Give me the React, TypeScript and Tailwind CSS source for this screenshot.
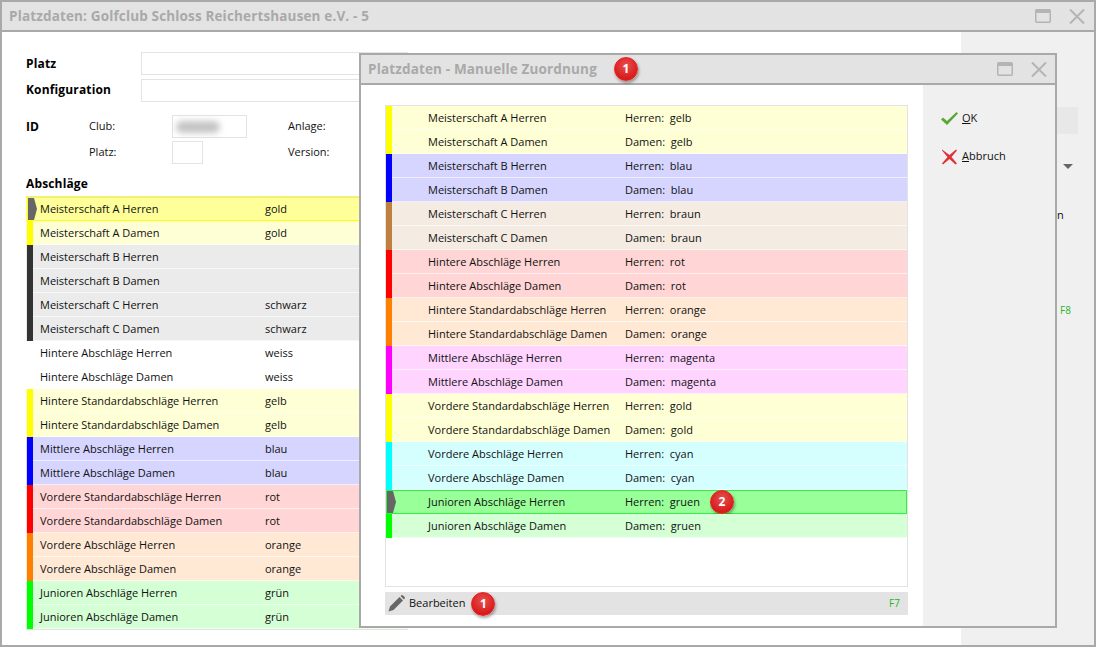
type Row = { name: string; value: string; strip: string; bg: string; active?: string }

const yellow = { strip: 'bg-[#ffff00]', bg: 'bg-[#ffffd5]' }
const blue = { strip: 'bg-[#0000ff]', bg: 'bg-[#d5d5ff]' }
const brown = { strip: 'bg-[#bf7f3f]', bg: 'bg-[#f4ebe2]' }
const red = { strip: 'bg-[#ff0000]', bg: 'bg-[#ffd5d5]' }
const orange = { strip: 'bg-[#ff8000]', bg: 'bg-[#ffe9d5]' }
const magenta = { strip: 'bg-[#ff00ff]', bg: 'bg-[#ffd5ff]' }
const cyan = { strip: 'bg-[#00ffff]', bg: 'bg-[#d5ffff]' }
const green = { strip: 'bg-[#00ff00]', bg: 'bg-[#d5ffd5]' }
const dark = { strip: 'bg-[#333333]', bg: 'bg-[#ebebeb]' }
const white = { strip: 'bg-white', bg: 'bg-white' }

const leftRows: Row[] = [
  { name: 'Meisterschaft A Herren', value: 'gold', strip: yellow.strip, bg: 'bg-[#ffff99]', active: 'border-y border-[#ffff00]' },
  { name: 'Meisterschaft A Damen', value: 'gold', ...yellow },
  { name: 'Meisterschaft B Herren', value: '', ...dark },
  { name: 'Meisterschaft B Damen', value: '', ...dark },
  { name: 'Meisterschaft C Herren', value: 'schwarz', ...dark },
  { name: 'Meisterschaft C Damen', value: 'schwarz', ...dark },
  { name: 'Hintere Abschläge Herren', value: 'weiss', ...white },
  { name: 'Hintere Abschläge Damen', value: 'weiss', ...white },
  { name: 'Hintere Standardabschläge Herren', value: 'gelb', ...yellow },
  { name: 'Hintere Standardabschläge Damen', value: 'gelb', ...yellow },
  { name: 'Mittlere Abschläge Herren', value: 'blau', ...blue },
  { name: 'Mittlere Abschläge Damen', value: 'blau', ...blue },
  { name: 'Vordere Standardabschläge Herren', value: 'rot', ...red },
  { name: 'Vordere Standardabschläge Damen', value: 'rot', ...red },
  { name: 'Vordere Abschläge Herren', value: 'orange', ...orange },
  { name: 'Vordere Abschläge Damen', value: 'orange', ...orange },
  { name: 'Junioren Abschläge Herren', value: 'grün', ...green },
  { name: 'Junioren Abschläge Damen', value: 'grün', ...green },
]

const modalRows: Row[] = [
  { name: 'Meisterschaft A Herren', value: 'Herren:  gelb', ...yellow },
  { name: 'Meisterschaft A Damen', value: 'Damen:  gelb', ...yellow },
  { name: 'Meisterschaft B Herren', value: 'Herren:  blau', ...blue },
  { name: 'Meisterschaft B Damen', value: 'Damen:  blau', ...blue },
  { name: 'Meisterschaft C Herren', value: 'Herren:  braun', ...brown },
  { name: 'Meisterschaft C Damen', value: 'Damen:  braun', ...brown },
  { name: 'Hintere Abschläge Herren', value: 'Herren:  rot', ...red },
  { name: 'Hintere Abschläge Damen', value: 'Damen:  rot', ...red },
  { name: 'Hintere Standardabschläge Herren', value: 'Herren:  orange', ...orange },
  { name: 'Hintere Standardabschläge Damen', value: 'Damen:  orange', ...orange },
  { name: 'Mittlere Abschläge Herren', value: 'Herren:  magenta', ...magenta },
  { name: 'Mittlere Abschläge Damen', value: 'Damen:  magenta', ...magenta },
  { name: 'Vordere Standardabschläge Herren', value: 'Herren:  gold', ...yellow },
  { name: 'Vordere Standardabschläge Damen', value: 'Damen:  gold', ...yellow },
  { name: 'Vordere Abschläge Herren', value: 'Herren:  cyan', ...cyan },
  { name: 'Vordere Abschläge Damen', value: 'Damen:  cyan', ...cyan },
  { name: 'Junioren Abschläge Herren', value: 'Herren:  gruen', strip: green.strip, bg: 'bg-[#99ff99]', active: 'border border-[#33ee44]' },
  { name: 'Junioren Abschläge Damen', value: 'Damen:  gruen', ...green },
]

function Badge({ n }: { n: number }) {
  return (
    <span className="flex h-[24px] w-[24px] shrink-0 items-center justify-center rounded-full border border-[#e82020] bg-[radial-gradient(circle_at_50%_35%,#e85050,#d81c1c_70%)] text-[12px] font-bold text-white shadow-[1px_2px_3px_rgba(0,0,0,0.35)]">
      {n}
    </span>
  )
}

function Marker({ className }: { className: string }) {
  return (
    <svg className={`absolute top-0 ${className}`} width="10" height="22" viewBox="0 0 10 22">
      <path d="M0 0h6l3 11-3 11H0z" fill="#666666" />
    </svg>
  )
}

function Separator({ className }: { className: string }) {
  return <span className={`absolute bottom-0 right-0 h-px bg-white/60 ${className}`} />
}

function TitleBar({ title, badge }: { title: string; badge?: boolean }) {
  return (
    <div className={`flex h-[30px] shrink-0 items-center border-b-[2px] border-[#a9a9a9] bg-[#e3e3e3] ${badge ? 'pl-[7px] pr-[8px]' : 'pl-[7px] pr-[9px]'}`}>
      <span className="text-[13.5px] font-bold tracking-[0.15px] text-[#a9a9a9]">{title}</span>
      {badge && (
        <span className="ml-[17px]">
          <Badge n={1} />
        </span>
      )}
      <svg className="ml-auto" width="16" height="15" viewBox="0 0 16 15">
        <rect x="0.75" y="0.75" width="14.5" height="12.5" rx="1" fill="none" stroke="#b4b4b4" strokeWidth="1.5" />
        <rect x="1" y="1" width="14" height="3" fill="#b4b4b4" />
      </svg>
      <svg className="ml-[18px]" width="16" height="15" viewBox="0 0 16 15">
        <path d="M1 0.5 15 14.5M15 0.5 1 14.5" stroke="#b4b4b4" strokeWidth="2" />
      </svg>
    </div>
  )
}

function Input({ className }: { className: string }) {
  return <div className={`border-[1.5px] border-[#e3e3e3] bg-white ${className}`} />
}

function LeftTable() {
  return (
    <div className="mt-[3px] flex w-[382px] flex-col border-y border-[#e3e3e3]">
      {leftRows.map((r) => (
        <div key={r.name} className={`relative flex h-[24px] items-center pl-[1px] ${r.bg} ${r.active ?? ''}`}>
          <span className={`mr-[7px] w-[6px] shrink-0 self-stretch ${r.strip}`} />
          <span className="w-[225px] shrink-0 text-[11px] text-[#111]">{r.name}</span>
          <span className="text-[11px] text-[#111]">{r.value}</span>
          {r.active ? <Marker className="left-[2px]" /> : <Separator className="left-[7px]" />}
        </div>
      ))}
    </div>
  )
}

function Modal() {
  return (
    <div className="absolute left-[357px] top-[51px] flex h-[575px] w-[698px] flex-col border-[2px] border-[#a9a9a9] bg-white">
      <TitleBar title="Platzdaten - Manuelle Zuordnung" badge />
      <div className="flex flex-1">
        <div className="flex w-[562px] flex-col pl-[24px] pt-[20px]">
          <div className="flex h-[482px] w-[523px] flex-col border border-[#e3e3e3] bg-white">
            {modalRows.map((r) => (
              <div key={r.name} className={`relative flex h-[24px] shrink-0 items-center ${r.bg} ${r.active ?? ''}`}>
                <span className={`w-[6px] shrink-0 self-stretch ${r.active ? 'mr-[35px]' : 'mr-[36px]'} ${r.strip}`} />
                <span className="w-[197px] shrink-0 text-[11px] text-[#111]">{r.name}</span>
                <span className="whitespace-pre text-[11px] text-[#111]">{r.value}</span>
                {r.active && (
                  <span className="ml-[10px]">
                    <Badge n={2} />
                  </span>
                )}
                {r.active ? <Marker className="left-0" /> : <Separator className="left-[6px]" />}
              </div>
            ))}
          </div>
          <div className="mt-[5px] flex h-[23px] w-[523px] items-center bg-[#e3e3e3] pl-[3px] pr-[8px]">
            <svg width="17" height="17" viewBox="0 0 17 17">
              <path d="M0.5 16.5 2 11.5 11.5 2l3.5 3.5L5.5 15z" fill="#666666" />
              <path d="M12.5 1 13.5 0.3q.7-.5 1.4.1l1.7 1.7q.6.7.1 1.4L16 4.5z" fill="#666666" />
            </svg>
            <span className="ml-[4px] text-[11px] text-[#111]">Bearbeiten</span>
            <span className="ml-[6px]">
              <Badge n={1} />
            </span>
            <span className="ml-auto text-[10px] text-[#1fb81f]">F7</span>
          </div>
        </div>
        <div className="flex flex-1 flex-col gap-[19px] bg-[#f0f0f0] pl-[17px] pt-[24px]">
          <div className="flex h-[19px] items-center">
            <svg width="19" height="15" viewBox="0 0 19 15">
              <path d="M1 8.5 3 6.5l4 3.5L16.5 1 18 2.5 7 14z" fill="#5aa832" />
            </svg>
            <span className="ml-[3px] text-[11px] text-[#111]">
              <span className="underline">O</span>K
            </span>
          </div>
          <div className="flex h-[19px] items-center">
            <svg width="19" height="16" viewBox="0 0 19 16">
              <path d="M2 0.5 9.5 6 16 0.5 17 1.5 11.5 8 17 14.5 15.5 15.5 9.5 10 3 15.5 2 14.5 7.5 8 2 1.5z" fill="#e03038" />
            </svg>
            <span className="ml-[3px] text-[11px] text-[#111]">
              <span className="underline">A</span>bbruch
            </span>
          </div>
        </div>
      </div>
    </div>
  )
}

export default function App() {
  return (
    <div className="relative flex h-[647px] w-[1096px] flex-col overflow-hidden border-[2px] border-[#a9a9a9] bg-white font-['Open_Sans',sans-serif]">
      <TitleBar title="Platzdaten: Golfclub Schloss Reichertshausen e.V. - 5" />
      <div className="flex flex-1">
        <div className="w-[959px] pl-[24px] pt-[20px]">
          <div className="flex h-[23px] items-center">
            <span className="w-[115px] text-[12px] font-bold tracking-[0.15px] text-black">Platz</span>
            <Input className="h-[23px] w-[267px]" />
          </div>
          <div className="mt-[4px] flex h-[23px] items-center">
            <span className="mb-[2px] w-[115px] text-[12px] font-bold tracking-[0.15px] text-black">Konfiguration</span>
            <Input className="h-[23px] w-[267px]" />
          </div>
          <div className="mt-[13px] flex h-[23px] items-center">
            <span className="w-[63px] text-[12px] font-bold tracking-[0.15px] text-black">ID</span>
            <span className="w-[83px] text-[11px] text-[#111]">Club:</span>
            <div className="flex h-[23px] w-[75px] items-center border-[1.5px] border-[#e3e3e3] bg-white pl-[3px]">
              <span className="h-[12px] w-[44px] rounded-full bg-[#c4c4c4] blur-[3px]" />
            </div>
            <span className="ml-[41px] text-[11px] text-[#111]">Anlage:</span>
          </div>
          <div className="mt-[3px] flex h-[23px] items-center">
            <span className="ml-[63px] w-[83px] text-[11px] text-[#111]">Platz:</span>
            <Input className="h-[23px] w-[31px]" />
            <span className="ml-[85px] text-[11px] text-[#111]">Version:</span>
          </div>
          <div className="mt-[11px] text-[12px] font-bold tracking-[0.15px] text-black">Abschläge</div>
          <LeftTable />
        </div>
        <div className="flex flex-1 flex-col bg-[#f0f0f0]">
          <div className="ml-[95px] mt-[75px] h-[27px] w-[22px] bg-[#e8e8e8]" />
          <svg className="ml-[102px] mt-[30px]" width="10" height="5" viewBox="0 0 10 5">
            <path d="M0 0h10L5 5z" fill="#666666" />
          </svg>
          <span className="ml-[96px] mt-[38px] text-[11px] text-[#111]">n</span>
          <span className="ml-[99px] mt-[79px] text-[10px] text-[#1fb81f]">F8</span>
        </div>
      </div>
      <Modal />
    </div>
  )
}
